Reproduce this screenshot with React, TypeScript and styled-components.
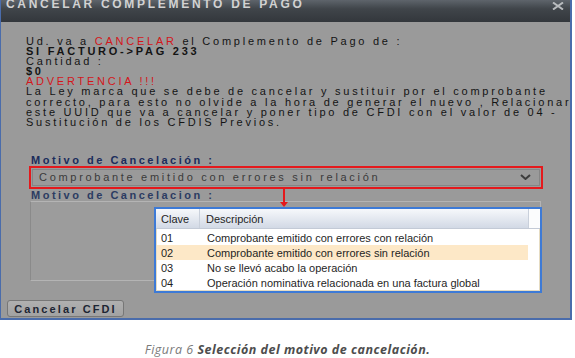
import React from 'react';
import styled, { createGlobalStyle } from 'styled-components';

const GlobalStyle = createGlobalStyle`
  body {
    margin: 0;
    background: #fff;
  }
`;

const Page = styled.div`
  width: 575px;
  height: 358px;
  display: flex;
  flex-direction: column;
  font-family: 'Liberation Sans', Arial, sans-serif;
`;

const Dialog = styled.div`
  position: relative;
  box-sizing: border-box;
  width: 572px;
  height: 320px;
  display: flex;
  flex-direction: column;
  background: #9a9a9a;
  border: 1px solid #4a6cab;
  border-top: none;
  border-right-width: 2px;
  border-bottom-width: 2px;
`;

const TitleBar = styled.div`
  height: 22px;
  flex-shrink: 0;
  display: flex;
  justify-content: space-between;
  align-items: flex-start;
  padding: 0 6px 0 5px;
  background: linear-gradient(#5e646b, #40454a 40%, #33373c);
`;

const Title = styled.span`
  margin-top: -1px;
  font-size: 12px;
  font-weight: bold;
  line-height: 10px;
  letter-spacing: 2.7px;
  color: #d2d2d2;
  white-space: nowrap;
`;

const Close = styled.svg`
  margin-top: 2px;
  width: 12px;
  height: 8px;
`;

const Body = styled.div`
  flex: 1;
  display: flex;
  flex-direction: column;
  padding: 14px 0 0 25px;
`;

const Message = styled.div`
  font-size: 11px;
  line-height: 10.1px;
  letter-spacing: 2.75px;
  color: #141414;
  white-space: nowrap;
`;

const Line = styled.div<{ $bold?: boolean; $red?: boolean }>`
  font-weight: ${({ $bold }) => ($bold ? 'bold' : 'normal')};
  color: ${({ $red }) => ($red ? '#d4161b' : 'inherit')};
`;

const Red = styled.span`
  color: #d4161b;
`;

const Form = styled.div`
  margin: 27px 0 0 3px;
  width: 514px;
  display: flex;
  flex-direction: column;
`;

const FieldLabel = styled.div<{ $soft?: boolean }>`
  margin-left: 2px;
  font-size: 11px;
  font-weight: bold;
  line-height: 12px;
  letter-spacing: 2.5px;
  color: ${({ $soft }) => ($soft ? '#2c3c62' : '#1b2c5c')};
  white-space: nowrap;
`;

const RedFrame = styled.div`
  border: 2px solid #e4191c;
  padding: 1px;
`;

const Select = styled.div`
  height: 15px;
  display: flex;
  align-items: center;
  justify-content: space-between;
  padding: 0 8px 0 6px;
  border: 1px solid #858585;
  font-size: 11px;
  letter-spacing: 2.7px;
  color: #3a3a3a;
  white-space: nowrap;
`;

const TextArea = styled.div`
  margin-left: 1px;
  width: 511px;
  height: 80px;
  box-sizing: border-box;
  border: 1px solid #b4b4b4;
  border-left-color: #8a8a8a;
  background: #9c9c9c;
`;

const Footer = styled.div`
  padding: 0 0 1px 6px;
`;

const Button = styled.div`
  display: inline-flex;
  align-items: center;
  justify-content: center;
  box-sizing: border-box;
  width: 117px;
  height: 17px;
  border: 1px solid #777;
  border-radius: 3px;
  background: linear-gradient(#b0b0b0, #a2a2a2);
  font-size: 11px;
  font-weight: bold;
  letter-spacing: 2.1px;
  color: #1d2533;
`;

const Connector = styled.div`
  position: absolute;
  left: 282px;
  top: 188px;
  width: 2px;
  height: 14px;
  background: #e4191c;

  &::after {
    content: '';
    position: absolute;
    left: -3px;
    top: 14px;
    border-left: 4px solid transparent;
    border-right: 4px solid transparent;
    border-top: 5px solid #e4191c;
  }
`;

const Popup = styled.div`
  position: absolute;
  left: 153px;
  top: 207px;
  width: 388px;
  height: 86px;
  box-sizing: border-box;
  border: 2px solid #3d7ad6;
  background: #fff;
  display: flex;
  flex-direction: column;
  font-size: 11px;
  color: #1f1f1f;
`;

const PopHeader = styled.div`
  height: 20px;
  display: grid;
  grid-template-columns: 44px 1fr 12px;
  align-items: center;
  background: linear-gradient(#f6f8fb, #d2d9e5);
  border-bottom: 1px solid #c3cad6;
`;

const HeadCell = styled.div<{ $sep?: boolean }>`
  height: 100%;
  display: flex;
  align-items: center;
  padding-left: ${({ $sep }) => ($sep ? '6px' : '5px')};
  border-right: ${({ $sep }) => ($sep ? 'none' : '1px solid #c9d0db')};
`;

const Corner = styled.div`
  height: 100%;
  box-sizing: border-box;
  background: #fbfcfd;
  border-left: 1px solid #c9d0db;
`;

const PopList = styled.div`
  flex: 1;
  padding-top: 1px;
  border: 1px solid #e6dcc2;
  border-top: none;
`;

const Row = styled.div<{ $active?: boolean }>`
  margin-right: 11px;
  height: 15px;
  display: grid;
  grid-template-columns: 46px 1fr;
  align-items: center;
  padding-left: 4px;
  background: ${({ $active }) => ($active ? '#fde8c7' : 'transparent')};
  white-space: nowrap;
`;

const CaptionArea = styled.div`
  flex: 1;
  display: flex;
  align-items: center;
  justify-content: center;
  padding-top: 20px;
`;

const Caption = styled.div`
  font-family: 'Open Sans', sans-serif;
  font-size: 12.5px;
  letter-spacing: 0.5px;
  font-style: italic;
  color: #7a7a7a;

  b {
    color: #4d4d4d;
  }
`;

const reasons = [
  { code: '01', text: 'Comprobante emitido con errores con relación' },
  { code: '02', text: 'Comprobante emitido con errores sin relación' },
  { code: '03', text: 'No se llevó acabo la operación' },
  { code: '04', text: 'Operación nominativa relacionada en una factura global' },
];

export default function App() {
  return (
    <Page>
      <GlobalStyle />
      <Dialog>
        <TitleBar>
          <Title>CANCELAR COMPLEMENTO DE PAGO</Title>
          <Close viewBox="0 0 12 8">
            <path d="M1 0.5 L11 7.5 M11 0.5 L1 7.5" stroke="#b9bcbf" strokeWidth="2" />
          </Close>
        </TitleBar>
        <Body>
          <Message>
            <Line>
              Ud. va a <Red>CANCELAR</Red> el Complemento de Pago de :
            </Line>
            <Line $bold>SI FACTURO-&gt;PAG 233</Line>
            <Line>Cantidad :</Line>
            <Line $bold>$0</Line>
            <Line $red>ADVERTENCIA !!!</Line>
            <Line>La Ley marca que se debe de cancelar y sustituir por el comprobante</Line>
            <Line>correcto, para esto no olvide a la hora de generar el nuevo , Relacionar</Line>
            <Line>este UUID que va a cancelar y poner tipo de CFDI con el valor de 04 -</Line>
            <Line>Sustitución de los CFDIS Previos.</Line>
          </Message>
          <Form>
            <FieldLabel>Motivo de Cancelación :</FieldLabel>
            <RedFrame>
              <Select>
                <span>Comprobante emitido con errores sin relación</span>
                <svg width="11" height="6" viewBox="0 0 11 6">
                  <path d="M1 1 L5.5 5 L10 1" fill="none" stroke="#3c3c3c" strokeWidth="2" />
                </svg>
              </Select>
            </RedFrame>
            <FieldLabel $soft>Motivo de Cancelacion :</FieldLabel>
            <TextArea />
          </Form>
        </Body>
        <Footer>
          <Button>Cancelar CFDI</Button>
        </Footer>
        <Connector />
        <Popup>
          <PopHeader>
            <HeadCell>Clave</HeadCell>
            <HeadCell $sep>Descripción</HeadCell>
            <Corner />
          </PopHeader>
          <PopList>
            {reasons.map((r) => (
              <Row key={r.code} $active={r.code === '02'}>
                <span>{r.code}</span>
                <span>{r.text}</span>
              </Row>
            ))}
          </PopList>
        </Popup>
      </Dialog>
      <CaptionArea>
        <Caption>
          Figura 6 <b>Selección del motivo de cancelación.</b>
        </Caption>
      </CaptionArea>
    </Page>
  );
}
